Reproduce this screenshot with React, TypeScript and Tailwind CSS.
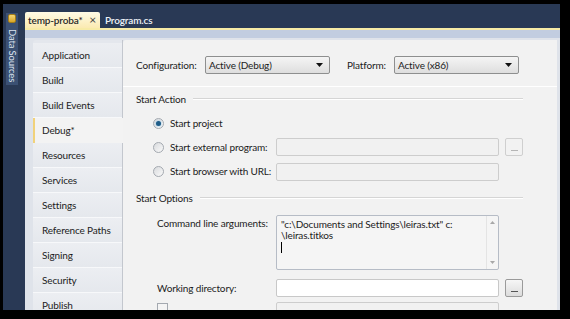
import clsx from 'clsx'

const navItems = [
  'Application',
  'Build',
  'Build Events',
  'Debug*',
  'Resources',
  'Services',
  'Settings',
  'Reference Paths',
  'Signing',
  'Security',
  'Publish',
]

function Caret() {
  return (
    <svg width="7" height="4" viewBox="0 0 7 4" className="shrink-0">
      <path d="M0 0h7L3.5 4z" fill="#111" />
    </svg>
  )
}

function Select({ value }: { value: string }) {
  return (
    <div className="w-[125px] h-[18px] rounded-[2px] border border-[#8e8f8f] bg-gradient-to-b from-[#f5f5f5] to-[#dedede] flex items-center pl-[3px] pr-[6px] justify-between">
      <span>{value}</span>
      <Caret />
    </div>
  )
}

function Radio({ checked }: { checked?: boolean }) {
  return (
    <div className="w-[11px] h-[11px] rounded-full border border-[#a4a9b0] bg-gradient-to-br from-[#d8dadd] to-[#fafafa] flex items-center justify-center shrink-0">
      {checked && <div className="w-[5px] h-[5px] rounded-full bg-[#1f5c87] shadow-[0_0_2px_#6fb4e0]" />}
    </div>
  )
}

function Section({ title }: { title: string }) {
  return (
    <div className="flex items-center h-[12px] pr-[34px]">
      <span>{title}</span>
      <div className="flex-1 ml-[7px] h-[2px] bg-[#d5d5d5] border-b border-white" />
    </div>
  )
}

function Browse({ disabled }: { disabled?: boolean }) {
  return (
    <div
      className={clsx(
        'w-[18px] h-[18px] ml-[6px] rounded-[2px] border flex items-end justify-center pb-[4px] shrink-0',
        disabled ? 'border-[#cfcfcf] bg-[#f2f2f2]' : 'border-[#9a9a9a] bg-gradient-to-b from-[#f6f6f6] to-[#dcdcdc]'
      )}
    >
      <div className={clsx('w-[7px] h-[1px]', disabled ? 'bg-[#b5b5b5]' : 'bg-[#555]')} />
    </div>
  )
}

export default function App() {
  return (
    <div className="w-[570px] h-[319px] bg-black overflow-hidden pt-[4px] pl-[3px] pr-[10px] text-[10px] tracking-[-0.15px] whitespace-nowrap text-[#1c1c1c] [font-family:Lato,'Open_Sans',sans-serif]">
      <div className="flex h-[306px] bg-[#293955] overflow-hidden">
        {/* tool window strip */}
        <div className="w-[22px] shrink-0 pt-[9px] pl-[3px]">
          <div className="w-[12px] h-[72px] bg-[#3b5073] flex flex-col items-center pt-[1px]">
            <div className="w-[8px] h-[9px] rounded-[2px] bg-gradient-to-b from-[#f7d873] to-[#d9a622] border border-[#a47d1a]" />
            <span className="mt-[6px] text-[9.5px] leading-none text-[#dbe3ef] [writing-mode:vertical-rl]">Data Sources</span>
          </div>
        </div>

        <div className="flex-1 flex flex-col min-w-0 min-h-0">
          {/* document tabs */}
          <div className="h-[24px] shrink-0 flex items-end">
            <div className="w-[75px] h-[16px] bg-gradient-to-b from-[#fffbe6] to-[#fbeab1] rounded-t-[2px] flex items-center pl-[3px] pr-[4px] justify-between">
              <span className="font-semibold text-[#2a2a2a]">temp-proba*</span>
              <span className="text-[#444] text-[12px] leading-none">×</span>
            </div>
            <div className="h-[16px] flex items-center pl-[5px] text-[#eef2f8] font-semibold">Program.cs</div>
          </div>
          <div className="h-[2px] shrink-0 bg-[#f7eba6]" />
          <div className="h-[8px] shrink-0 bg-[#c2cde0]" />

          {/* designer body */}
          <div className="flex-1 flex bg-[#dfe3ea] pt-[2px] pl-[8px] pr-[3px] min-h-0 overflow-hidden">
            <div className="w-[90px] shrink-0 flex flex-col bg-[#e4e7ed] rounded-tl-[3px] pt-[3px] border-r border-[#c3c7ce]">
              {navItems.map(item => {
                const active = item === 'Debug*'
                return (
                  <div
                    key={item}
                    className={clsx(
                      'h-[25px] shrink-0 flex items-center',
                      active
                        ? 'bg-[#f3f3f3] border-l-2 border-[#f1d27a] pl-[7px] -mr-[1px]'
                        : 'pl-[9px] bg-gradient-to-b from-[#eceef2] to-[#e5e8ed] border-b border-[#f7f8fa]'
                    )}
                  >
                    {item}
                  </div>
                )
              })}
            </div>

            <div className="flex-1 bg-[#f2f2f2] flex flex-col pt-[16px] min-w-0 rounded-tl-[3px]">
              {/* configuration row */}
              <div className="flex items-center pl-[13px]">
                <span className="w-[69px]">Configuration:</span>
                <Select value="Active (Debug)" />
                <span className="w-[47px] ml-[17px]">Platform:</span>
                <Select value="Active (x86)" />
              </div>
              <div className="mt-[12px] h-[2px] bg-[#d3d3d3] border-b border-white" />

              <div className="pl-[13px] flex flex-col">
                <div className="mt-[6px]">
                  <Section title="Start Action" />
                </div>

                <div className="mt-[6px] h-[24px] flex items-center">
                  <div className="w-[140px] flex items-center gap-[6px] pl-[17px]">
                    <Radio checked />
                    <span>Start project</span>
                  </div>
                </div>
                <div className="h-[24px] flex items-center">
                  <div className="w-[140px] flex items-center gap-[6px] pl-[17px]">
                    <Radio />
                    <span>Start external program:</span>
                  </div>
                  <div className="w-[223px] h-[18px] rounded-[2px] border border-[#cdcdcd] bg-[#f1f1f1]" />
                  <Browse disabled />
                </div>
                <div className="h-[25px] flex items-center">
                  <div className="w-[140px] flex items-center gap-[6px] pl-[17px]">
                    <Radio />
                    <span>Start browser with URL:</span>
                  </div>
                  <div className="w-[223px] h-[18px] rounded-[2px] border border-[#cdcdcd] bg-[#f1f1f1]" />
                </div>

                <div className="mt-[8px]">
                  <Section title="Start Options" />
                </div>

                <div className="mt-[11px] flex items-start">
                  <div className="w-[140px] pl-[21px] pt-[1px]">Command line arguments:</div>
                  <div className="w-[223px] h-[55px] rounded-[2px] border border-[#b6bcc6] bg-[#f5f5f5] flex">
                    <div className="flex-1 pl-[4px] pt-[3px] text-[10px] leading-[11px] text-[#222]">
                      <div>"c:\Documents and Settings\leiras.txt" c:</div>
                      <div>\leiras.titkos</div>
                      <div className="w-[1px] h-[11px] bg-black mt-[1px]" />
                    </div>
                    <div className="w-[12px] border-l border-[#e4e4e4] flex flex-col items-center justify-between py-[5px]">
                      <svg width="5" height="3" viewBox="0 0 5 3"><path d="M0 3h5L2.5 0z" fill="#a8a8a8" /></svg>
                      <svg width="5" height="3" viewBox="0 0 5 3"><path d="M0 0h5L2.5 3z" fill="#a8a8a8" /></svg>
                    </div>
                  </div>
                </div>

                <div className="mt-[9px] flex items-center">
                  <div className="w-[140px] pl-[21px]">Working directory:</div>
                  <div className="w-[223px] h-[18px] rounded-[2px] border border-[#c8c8c8] bg-white" />
                  <Browse />
                </div>

                <div className="mt-[5px] flex items-start">
                  <div className="w-[140px] pl-[21px]">
                    <div className="w-[11px] h-[11px] border border-[#a4a9b0] bg-[#f4f4f4] mt-[1px]" />
                  </div>
                  <div className="w-[223px] h-[18px] rounded-[2px] border border-[#cdcdcd] bg-[#f1f1f1]" />
                </div>
              </div>
            </div>
          </div>
        </div>
      </div>
    </div>
  )
}
